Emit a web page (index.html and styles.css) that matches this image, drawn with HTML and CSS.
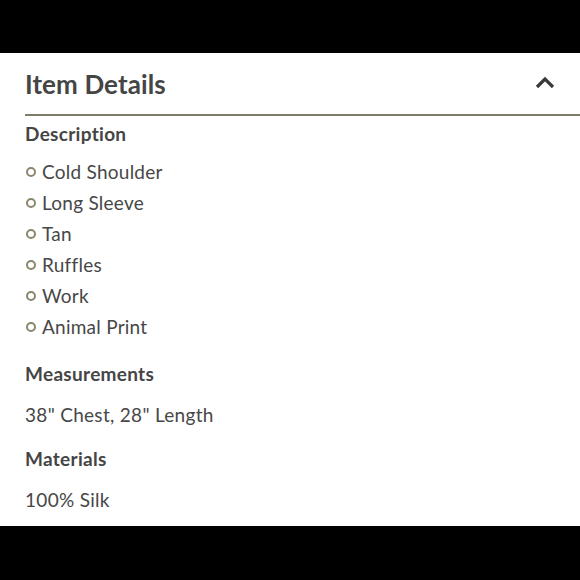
FILE: index.html
```html
<!DOCTYPE html>
<html>
<head>
<meta charset="utf-8">
<link rel="stylesheet" href="styles.css">
</head>
<body>
<div class="bar-top"></div>
<section class="panel">
  <header class="panel-head">
    <h1 class="title">Item Details</h1>
    <svg class="chevron" width="20" height="14" viewBox="0 0 20 14"><path d="M2 11 L10 3 L18 11" fill="none" stroke="#3a3a3a" stroke-width="3.2"/></svg>
  </header>
  <h2 class="section-title first">Description</h2>
  <ul class="tags">
    <li><span class="dot"></span>Cold Shoulder</li>
    <li><span class="dot"></span>Long Sleeve</li>
    <li><span class="dot"></span>Tan</li>
    <li><span class="dot"></span>Ruffles</li>
    <li><span class="dot"></span>Work</li>
    <li><span class="dot"></span>Animal Print</li>
  </ul>
  <h2 class="section-title">Measurements</h2>
  <p class="value">38" Chest, 28" Length</p>
  <h2 class="section-title">Materials</h2>
  <p class="value">100% Silk</p>
</section>
</body>
</html>
```
FILE: styles.css
```css
html, body {
  margin: 0;
  padding: 0;
  background: #000;
}
body {
  width: 580px;
  height: 580px;
  font-family: Lato, "Open Sans", sans-serif;
  color: #474747;
}
.bar-top {
  height: 53px;
}
.panel {
  background: #fff;
  height: 473px;
  padding-left: 25px;
  box-sizing: border-box;
}
.panel-head {
  display: flex;
  align-items: center;
  justify-content: space-between;
  padding: 16px 0 15px 0;
  border-bottom: 2px solid #7f7c68;
}
.title {
  margin: 0;
  font-size: 26px;
  line-height: 30px;
  font-weight: 700;
  letter-spacing: 0.1px;
  color: #454545;
}
.chevron {
  margin-right: 25px;
  margin-top: -3px;
}
.section-title {
  margin: 20px 0 0 0;
  font-size: 19px;
  line-height: 24px;
  font-weight: 700;
  letter-spacing: 0.3px;
  color: #454545;
}
.section-title.first {
  margin-top: 6px;
}
.tags {
  list-style: none;
  margin: 10px 0 0 0;
  padding: 0;
}
.tags li {
  display: flex;
  align-items: center;
  font-size: 19px;
  line-height: 31px;
  letter-spacing: 0.25px;
  color: #474747;
}
.dot {
  flex: none;
  box-sizing: border-box;
  width: 10px;
  height: 10px;
  border: 2px solid #8a876d;
  border-radius: 50%;
  margin: 1px 6px 0 1px;
}
.value {
  margin: 17px 0 0 0;
  font-size: 19px;
  line-height: 24px;
  letter-spacing: 0.3px;
  color: #474747;
}
```
